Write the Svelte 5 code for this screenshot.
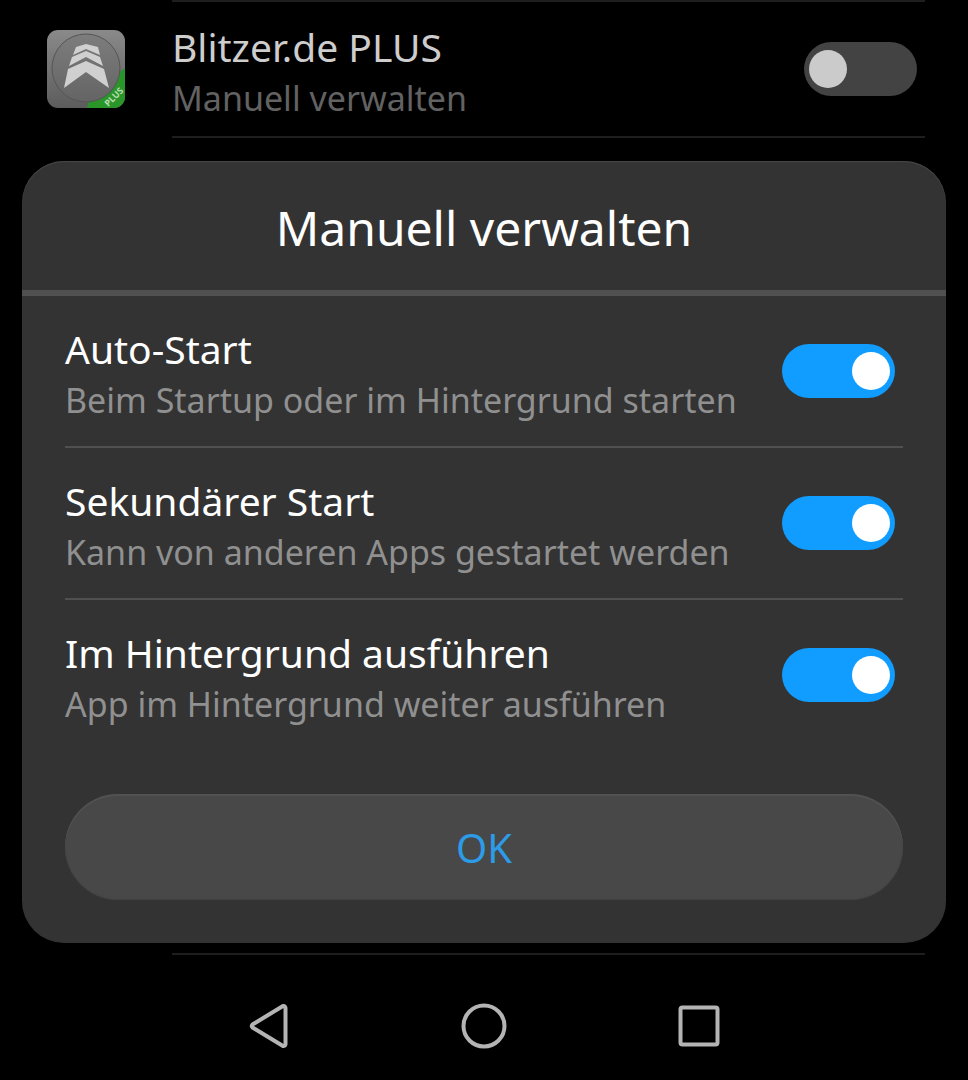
<script lang="ts">
  interface Option {
    id: string;
    title: string;
    description: string;
    enabled: boolean;
  }

  let managed = $state(false);

  let options = $state<Option[]>([
    {
      id: 'auto-start',
      title: 'Auto-Start',
      description: 'Beim Startup oder im Hintergrund starten',
      enabled: true,
    },
    {
      id: 'secondary-start',
      title: 'Sekundärer Start',
      description: 'Kann von anderen Apps gestartet werden',
      enabled: true,
    },
    {
      id: 'background',
      title: 'Im Hintergrund ausführen',
      description: 'App im Hintergrund weiter ausführen',
      enabled: true,
    },
  ]);
</script>

<div class="screen">
  <div class="app-row">
    <svg class="app-icon" viewBox="0 0 78 78" aria-hidden="true">
      <defs>
        <linearGradient id="tile" x1="0" y1="0" x2="0" y2="1">
          <stop offset="0" stop-color="#8a8a8a" />
          <stop offset="1" stop-color="#5c5c5c" />
        </linearGradient>
        <linearGradient id="disc" x1="0" y1="0" x2="0" y2="1">
          <stop offset="0" stop-color="#7d7d7d" />
          <stop offset="1" stop-color="#646464" />
        </linearGradient>
        <clipPath id="tile-clip">
          <rect width="78" height="78" rx="11" />
        </clipPath>
      </defs>
      <g clip-path="url(#tile-clip)">
        <rect width="78" height="78" fill="url(#tile)" />
        <path d="M78 38 V78 H40 L42 70 L70 44 Z" fill="#2a962a" />
        <circle cx="39" cy="38" r="34" fill="url(#disc)" stroke="#555" stroke-width="1" />
        <path
          d="M29 17 L39 14 L51 17 L53 25 L39 19 L26 25 Z M25 27 L39 21 L53 27 L56 36 L39 27 L22 36 Z M21 39 L39 31 L57 39 L62 58 L39 42 L17 58 Z"
          fill="#d0d0d0"
        />
      </g>
      <text class="badge" x="67" y="70" text-anchor="middle" transform="rotate(-45 67 67)">PLUS</text>
    </svg>
    <label class="row app-info">
      <span class="text">
        <span class="title">Blitzer.de PLUS</span>
        <span class="description">Manuell verwalten</span>
      </span>
      <input class="switch" type="checkbox" role="switch" bind:checked={managed} />
    </label>
  </div>

  <div class="dialog" role="dialog" aria-labelledby="dialog-title">
    <h1 id="dialog-title">Manuell verwalten</h1>
    <div class="options">
      {#each options as option (option.id)}
        <label class="row option">
          <span class="text">
            <span class="title">{option.title}</span>
            <span class="description">{option.description}</span>
          </span>
          <input class="switch" type="checkbox" role="switch" bind:checked={option.enabled} />
        </label>
      {/each}
    </div>
    <button type="button" class="ok">OK</button>
  </div>

  <hr />

  <nav>
    <button type="button" aria-label="Zurück">
      <svg viewBox="0 0 48 48"><path d="M7.500 22.500 L38 4 Q40 3.500 40.500 6 V42 Q40 44.500 38 44 L7.500 25.500 Q6 24 7.500 22.500 Z" /></svg>
    </button>
    <button type="button" aria-label="Startseite">
      <svg viewBox="0 0 48 48"><circle cx="24" cy="24" r="20.500" /></svg>
    </button>
    <button type="button" aria-label="Letzte Apps">
      <svg viewBox="0 0 48 48"><rect x="5.500" y="5.500" width="37" height="37" rx="2" /></svg>
    </button>
  </nav>
</div>

<style>
  :global(body) {
    background: #000;
  }

  .screen {
    min-height: 100vh;
    display: flex;
    flex-direction: column;
    box-sizing: border-box;
    background: #000;
    font-family: 'Noto Sans', 'Open Sans', sans-serif;
  }

  .app-row {
    display: flex;
    align-items: center;
    gap: 47px;
    padding: 0 43px 0 47px;
  }

  .app-icon {
    width: 78px;
    height: 78px;
    flex: none;
  }

  .badge {
    font-size: 9px;
    font-weight: 700;
    fill: #b9dcb4;
  }

  .row {
    display: flex;
    align-items: center;
    justify-content: space-between;
    gap: 24px;
    padding-right: 8px;
    cursor: pointer;
  }

  .app-info {
    flex: 1;
    min-height: 134px;
    border-top: 2px solid #1e1e1e;
    border-bottom: 2px solid #1e1e1e;
  }

  .text {
    display: flex;
    flex-direction: column;
    padding-top: 6px;
  }

  .title {
    font-size: 39px;
    line-height: 52px;
    color: #fff;
  }

  .description {
    font-size: 34px;
    line-height: 50px;
    color: #909090;
  }

  .app-info .title {
    color: #cdcdcd;
  }

  .app-info .description {
    color: #626262;
  }

  .switch {
    appearance: none;
    display: flex;
    align-items: center;
    flex: none;
    box-sizing: border-box;
    width: 113px;
    height: 54px;
    margin: 0;
    padding: 0 5px;
    border-radius: 27px;
    background: #434343;
    cursor: pointer;
  }

  .switch::before {
    content: '';
    width: 38px;
    height: 38px;
    border-radius: 50%;
    background: #cbcbcb;
  }

  .switch:checked {
    justify-content: flex-end;
    background: #109dff;
  }

  .switch:checked::before {
    background: #fff;
  }

  .dialog {
    margin: 23px 22px 10px;
    padding-bottom: 43px;
    border-radius: 42px;
    background: #333;
    box-shadow: inset 0 1px 1px #484848;
  }

  h1 {
    margin: 0;
    padding: 34px 43px 30px;
    border-bottom: 6px solid #505050;
    font-size: 48px;
    font-weight: 400;
    line-height: 65px;
    text-align: center;
    color: #fff;
  }

  .options {
    padding: 0 43px;
  }

  .option {
    min-height: 150px;
  }

  .option + .option {
    border-top: 2px solid #505050;
  }

  .ok {
    display: block;
    width: calc(100% - 86px);
    height: 106px;
    margin: 44px 43px 0;
    border: 0;
    border-radius: 53px;
    background: #484848;
    box-shadow: inset 0 2px 1px #525252, inset 0 -1px 1px #424242;
    font-family: inherit;
    font-size: 40px;
    color: #2c9be8;
    cursor: pointer;
  }

  hr {
    width: auto;
    height: 2px;
    margin: 0 43px 0 172px;
    border: 0;
    background: #1e1e1e;
  }

  nav {
    flex: 1;
    display: flex;
    align-items: center;
    justify-content: center;
    gap: 167px;
    padding-top: 16px;
  }

  nav button {
    display: flex;
    padding: 0;
    border: 0;
    background: none;
    cursor: pointer;
  }

  nav svg {
    width: 48px;
    height: 48px;
    fill: none;
    stroke: #b4b4b4;
    stroke-width: 4;
    stroke-linejoin: round;
  }
</style>
